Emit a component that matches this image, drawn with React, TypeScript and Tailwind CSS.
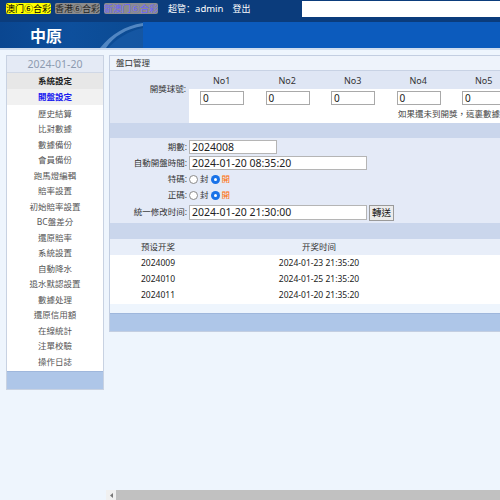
import React from 'react';

const FONT = { fontFamily: '"Noto Sans", "Noto Sans CJK TC", "Noto Sans CJK SC", sans-serif' };
const CJK = { fontFamily: '"Noto Sans CJK SC", "Noto Sans CJK TC", sans-serif' };

const menu = [
  '歷史結算', '比對數據', '數據備份', '會員備份', '跑馬燈編輯', '賠率設置', '初始賠率設置',
  'BC盤差分', '還原賠率', '系統設置', '自動降水', '退水默認設置', '數據处理', '還原信用額',
  '在線統計', '注單校驗', '操作日誌',
];

const draws = [
  ['2024009', '2024-01-23 21:35:20'],
  ['2024010', '2024-01-25 21:35:20'],
  ['2024011', '2024-01-20 21:35:20'],
];

function Radio({ checked }: { checked?: boolean }) {
  return checked ? (
    <span className="inline-flex w-[9px] h-[9px] rounded-full bg-[#1a73e8] items-center justify-center mr-[2px]">
      <span className="w-[3px] h-[3px] rounded-full bg-white" />
    </span>
  ) : (
    <span className="inline-block w-[9px] h-[9px] rounded-full bg-white border border-[#8a8a8a] mr-[2px]" />
  );
}

function FormRow({ label, children, h = 'h-[16px]' }: { label: string; children: React.ReactNode; h?: string }) {
  return (
    <div className={`flex items-center ${h}`}>
      <div className="w-[79px] shrink-0 text-right pr-[2px] text-[#333]">{label}</div>
      <div className="flex items-center">{children}</div>
    </div>
  );
}

export default function App() {
  return (
    <div className="relative w-[500px] h-[500px] overflow-hidden bg-[#eef5fd] text-[8.5px] leading-none" style={FONT}>
      {/* top bar */}
      <div className="h-[22px] bg-[#0b3c7c] flex items-start">
        <div className="flex items-center gap-[4px] pl-[6px] pt-[3px] text-[9px]" style={CJK}>
          <span className="bg-[#ffff00] text-black py-[1px] rounded-[2px]">澳门⑥合彩</span>
          <span className="bg-[#8c8c8c] text-[#222] py-[1px] rounded-[2px]">香港⑥合彩</span>
          <span className="bg-[#8c8c8c] text-[#6b63ff] py-[1px] rounded-[2px]">新澳门⑥合彩</span>
          <span className="text-white ml-[6px]">超管：<span className="text-[9.5px]" style={FONT}>admin</span></span>
          <span className="text-white ml-[5px]">登出</span>
        </div>
        <div className="ml-auto mt-[1px] w-[198px] h-[16px] bg-white" />
      </div>
      {/* banner */}
      <div className="h-[26px] flex">
        <div className="relative w-[143px] shrink-0 bg-gradient-to-r from-[#0a4690] via-[#0d4f9c] to-[#0b4a92] overflow-hidden">
          <span className="absolute left-[30px] top-[5px] text-white font-bold text-[16px]" style={CJK}>中原</span>
          <svg className="absolute left-0 top-0" width="143" height="26" viewBox="0 0 143 26">
            <path d="M100 26 C112 12 124 4 143 1 L143 4 C126 7 114 14 106 26 Z" fill="#6f9fd6" opacity="0.7" />
            <path d="M108 26 C118 16 128 9 143 6 L143 26 Z" fill="#1c5fae" opacity="0.6" />
          </svg>
        </div>
        <div className="flex-1 bg-[#0c5bbd]" />
      </div>
      <div className="h-[2px] bg-[#cfdcee]" />

      <div className="flex items-start pt-[5px]">
        {/* sidebar */}
        <div className="ml-[6px] w-[98px] shrink-0 border border-[#c8d2e2] bg-white text-center">
          <div className="h-[17px] flex items-center justify-center bg-[#e4eaf5] text-[#8d9bb0] text-[10.5px] border-b border-[#d0d8e6]">2024-01-20</div>
          <div className="h-[16px] flex items-center justify-center bg-[#e7e7e7] font-bold text-[#222]">系統設定</div>
          <div className="h-[16px] flex items-center justify-center bg-[#f1f1f1] font-bold text-[#1c1cf0]">開盤設定</div>
          <div className="py-[1px]">
            {menu.map((m) => (
              <div key={m} className="h-[15.5px] flex items-center justify-center text-[#555]">{m}</div>
            ))}
          </div>
          <div className="h-[18px] bg-[#aec6e8] border-t border-[#9fb7dc]" />
        </div>

        {/* main */}
        <div className="ml-[5px] w-[420px] shrink-0 border border-[#c3cee1]">
          <div className="h-[15px] flex items-center pl-[6px] bg-[#eef3fb] border-b border-[#c8d2e4] text-[#333]">盤口管理</div>

          <div className="flex bg-[#dfe6f4]">
            <div className="w-[79px] shrink-0 flex items-center justify-end pr-[3px] text-[#333] pt-[2px] pb-[18px]">開獎球號:</div>
            <div className="flex-1">
              <div className="h-[18px] flex text-[9px]">
                {['No1', 'No2', 'No3', 'No4', 'No5'].map((n) => (
                  <div key={n} className="w-[65.5px] shrink-0 flex items-center justify-center text-[#333]">{n}</div>
                ))}
              </div>
              <div className="bg-white">
                <div className="h-[17px] flex items-center text-[10px]">
                  {[0, 1, 2, 3, 4].map((i) => (
                    <div key={i} className="w-[65.5px] shrink-0 pl-[11px]">
                      <div className="w-[44px] h-[14px] border border-[#a9a9a9] bg-white flex items-center pl-[2px] text-[#222]">0</div>
                    </div>
                  ))}
                </div>
                <div className="h-[17px] flex items-center pl-[209px] text-[#444] whitespace-nowrap">如果還未到開獎，這裏數據請勿修改</div>
              </div>
            </div>
          </div>

          <div className="h-[15px] bg-[#cad6ec]" />

          <div className="bg-[#e4eaf7] pt-[1px] pb-[1px]">
            <FormRow label="期數:">
              <div className="w-[88px] h-[14px] border border-[#b5b5b5] bg-white flex items-center pl-[2px] text-[#222] text-[10.5px]">2024008</div>
            </FormRow>
            <FormRow label="自動開盤時間:">
              <div className="w-[178px] h-[14px] border border-[#b5b5b5] bg-white flex items-center pl-[2px] text-[#222] text-[10.5px]">2024-01-20 08:35:20</div>
            </FormRow>
            <FormRow label="特碼:">
              <Radio /><span className="text-[#333] mr-[2px]">封</span>
              <Radio checked /><span className="text-[#ff6a00]">開</span>
            </FormRow>
            <FormRow label="正碼:">
              <Radio /><span className="text-[#333] mr-[2px]">封</span>
              <Radio checked /><span className="text-[#ff6a00]">開</span>
            </FormRow>
            <FormRow label="統一修改时间:" h="h-[19px]">
              <div className="w-[178px] h-[15px] border border-[#b5b5b5] bg-white flex items-center pl-[2px] text-[#222] text-[10.5px]">2024-01-20 21:30:00</div>
              <div className="ml-[2px] h-[16px] px-[2px] border border-[#9a9a9a] bg-[#ececec] flex items-center text-[#111] text-[9.5px]">轉送</div>
            </FormRow>
          </div>

          <div className="h-[16px] bg-[#cad6ec]" />

          <div className="h-[16px] flex items-center bg-[#e8eef9] text-[#333]">
            <div className="w-[96px] text-center">预设开奖</div>
            <div className="w-[226px] text-center">开奖时间</div>
          </div>
          <div className="bg-white pb-[1px]">
            {draws.map(([p, t]) => (
              <div key={p} className="h-[16px] flex items-center text-[#222] text-[8.5px]">
                <div className="w-[96px] text-center">{p}</div>
                <div className="w-[226px] text-center">{t}</div>
              </div>
            ))}
          </div>
          <div className="h-[9px] bg-[#eef5fd]" />
          <div className="h-[18px] bg-[#aec6e8] border-t border-[#9fb7dc]" />
        </div>
      </div>

      {/* horizontal scrollbar */}
      <div className="absolute left-[106px] right-0 bottom-0 h-[10px] flex">
        <div className="w-[10px] bg-[#f0f0f0] flex items-center justify-center">
          <svg width="5" height="5" viewBox="0 0 5 5"><path d="M4 0 L1 2.5 L4 5 Z" fill="#777" /></svg>
        </div>
        <div className="flex-1 bg-[#c1c1c1]" />
      </div>
    </div>
  );
}
